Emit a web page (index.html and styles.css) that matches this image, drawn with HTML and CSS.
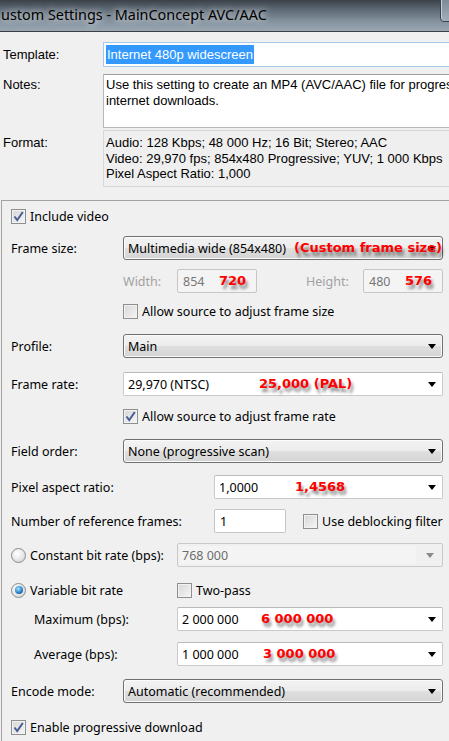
FILE: index.html
```html
<!DOCTYPE html>
<html>
<head>
<link rel="stylesheet" href="styles.css">
</head>
<body>
<div class="titlebar">
  <span class="title">ustom Settings - MainConcept AVC/AAC</span>
  <span class="close-btn"></span>
</div>

<div class="header">
  <div class="hrow template-row">
    <span class="hlabel">Template:</span>
    <div class="template-field"><span class="selected">Internet 480p widescreen</span></div>
  </div>
  <div class="hrow notes-row">
    <span class="hlabel">Notes:</span>
    <div class="notes-field">Use this setting to create an MP4 (AVC/AAC) file for progressive<br>internet downloads.</div>
  </div>
  <div class="hrow format-row">
    <span class="hlabel">Format:</span>
    <div class="format-field">Audio: 128 Kbps; 48 000 Hz; 16 Bit; Stereo; AAC<br>Video: 29,970 fps; 854x480 Progressive; YUV; 1 000 Kbps<br>Pixel Aspect Ratio: 1,000</div>
  </div>
</div>

<div class="panel">
  <div class="row r-include">
    <span class="check on"><svg width="13" height="13" viewBox="0 0 13 13"><path d="M2.5 6.5 L5.2 10 L10.8 2" fill="none" stroke="#4a5c97" stroke-width="2"/></svg></span>
    <span class="check-text">Include video</span>
  </div>

  <div class="row r-frame">
    <span class="lbl lbl-main">Frame size:</span>
    <div class="dropdown">Multimedia wide (854x480)<span class="arrow"></span><span class="note note-frame">(Custom frame size)</span></div>
  </div>

  <div class="row r-size">
    <span class="lbl lbl-main"></span>
    <span class="lbl dim lbl-w">Width:</span>
    <div class="numbox">854<span class="note note-num">720</span></div>
    <span class="lbl dim lbl-h">Height:</span>
    <div class="numbox">480<span class="note note-num">576</span></div>
  </div>

  <div class="row r-allow">
    <span class="lbl lbl-main"></span>
    <span class="check"></span>
    <span class="check-text">Allow source to adjust frame size</span>
  </div>

  <div class="row r-profile">
    <span class="lbl lbl-main">Profile:</span>
    <div class="dropdown">Main<span class="arrow"></span></div>
  </div>

  <div class="row r-rate">
    <span class="lbl lbl-main">Frame rate:</span>
    <div class="combo">29,970 (NTSC)<span class="arrow"></span><span class="note note-rate">25,000 (PAL)</span></div>
  </div>

  <div class="row r-allow2">
    <span class="lbl lbl-main"></span>
    <span class="check on"><svg width="13" height="13" viewBox="0 0 13 13"><path d="M2.5 6.5 L5.2 10 L10.8 2" fill="none" stroke="#4a5c97" stroke-width="2"/></svg></span>
    <span class="check-text">Allow source to adjust frame rate</span>
  </div>

  <div class="row r-field">
    <span class="lbl lbl-main">Field order:</span>
    <div class="dropdown">None (progressive scan)<span class="arrow"></span></div>
  </div>

  <div class="row r-par">
    <span class="lbl lbl-wide">Pixel aspect ratio:</span>
    <div class="combo">1,0000<span class="arrow"></span><span class="note note-par">1,4568</span></div>
  </div>

  <div class="row r-ref">
    <span class="lbl lbl-wide">Number of reference frames:</span>
    <div class="refbox">1</div>
    <span class="check"></span>
    <span class="check-text">Use deblocking filter</span>
  </div>

  <div class="row r-cbr">
    <span class="lbl lbl-mid"><span class="radio"></span><span class="check-text">Constant bit rate (bps):</span></span>
    <div class="combo disabled"><span class="combo-inner">768 000</span><span class="arrow"></span></div>
  </div>

  <div class="row r-vbr">
    <span class="lbl lbl-mid"><span class="radio on"><span class="dot"></span></span><span class="check-text">Variable bit rate</span></span>
    <span class="check"></span>
    <span class="check-text">Two-pass</span>
  </div>

  <div class="row r-max">
    <span class="lbl lbl-mid sub">Maximum (bps):</span>
    <div class="combo">2 000 000<span class="arrow"></span><span class="note note-bps">6 000 000</span></div>
  </div>

  <div class="row r-avg">
    <span class="lbl lbl-mid sub">Average (bps):</span>
    <div class="combo">1 000 000<span class="arrow"></span><span class="note note-bps2">3 000 000</span></div>
  </div>

  <div class="row r-encode">
    <span class="lbl lbl-main">Encode mode:</span>
    <div class="dropdown">Automatic (recommended)<span class="arrow"></span></div>
  </div>

  <div class="row r-enable">
    <span class="check on"><svg width="13" height="13" viewBox="0 0 13 13"><path d="M2.5 6.5 L5.2 10 L10.8 2" fill="none" stroke="#4a5c97" stroke-width="2"/></svg></span>
    <span class="check-text">Enable progressive download</span>
  </div>
</div>
</body>
</html>
```

FILE: styles.css
```css
html, body {
  margin: 0;
  width: 449px;
  height: 741px;
  overflow: hidden;
  background-color: #f0f0f0;
}

body {
  font-family: "Noto Sans", "DejaVu Sans", sans-serif;
  font-size: 12.5px;
  color: #000;
}

/* window title */
.titlebar {
  height: 31px;
  display: flex;
  align-items: center;
  background: linear-gradient(#3b4149 0%, #5c6874 30%, #85939f 70%, #9aa7b3 100%);
  border-bottom: 1px solid #3a3f45;
  position: relative;
}
.title {
  padding-left: 1px;
  margin-top: -2px;
  font-size: 14.4px;
  color: #000;
  text-shadow: 0 0 6px rgba(255,255,255,0.7), 0 0 10px rgba(255,255,255,0.5);
}
.close-btn {
  position: absolute;
  top: -1px;
  left: 440px;
  width: 20px;
  height: 21px;
  border: 1px solid #3c4148;
  border-bottom-left-radius: 4px;
  background: linear-gradient(#7e8a96, #a3afbb);
  box-shadow: inset 1px 0 0 #c6ced6;
}

/* top fields */
.header {
  font-family: "Liberation Sans", Arial, sans-serif;
  font-size: 13px;
  padding-left: 3px;
  overflow: hidden;
}
.hrow {
  display: flex;
}
.hlabel {
  width: 100px;
  flex: none;
}
.template-row {
  margin-top: 10px;
  align-items: center;
}
.template-field {
  width: 380px;
  flex: none;
  height: 25px;
  box-sizing: border-box;
  border: 1px solid #a6c9ec;
  background: #fff;
  padding: 2px 2px;
}
.selected {
  display: inline-block;
  background: #3399ff;
  color: #fff;
  line-height: 19px;
  padding: 0 1px;
}
.notes-row {
  margin-top: 7px;
}
.notes-row .hlabel {
  padding-top: 3px;
}
.notes-field {
  width: 380px;
  flex: none;
  height: 54px;
  box-sizing: border-box;
  border: 1px solid #b5b8bd;
  border-top-color: #9da1a6;
  background: #fff;
  padding: 2px 2px;
  line-height: 16px;
  white-space: nowrap;
  overflow: hidden;
}
.format-row {
  margin-top: 2px;
}
.format-row .hlabel {
  padding-top: 5px;
}
.format-field {
  width: 380px;
  flex: none;
  height: 57px;
  box-sizing: border-box;
  border: 1px solid #d8d8d8;
  background: #efefef;
  padding: 4px 2px;
  line-height: 15.5px;
  white-space: nowrap;
}

/* video panel */
.panel {
  margin: 13px 0 0 1px;
  border-top: 1px solid #a3a3a3;
  border-left: 1px solid #a3a3a3;
  padding: 0 6px 20px 9px;
}
.row {
  display: flex;
  align-items: center;
}
.lbl {
  flex: none;
  display: flex;
  align-items: center;
}
.lbl-main { width: 112px; }
.lbl-wide { width: 203px; }
.lbl-mid { width: 166px; }
.sub { padding-left: 23px; box-sizing: border-box; }
.dim { color: #a2a2a2; }
.lbl-w { width: 54px; }
.lbl-h { width: 57px; margin-left: 49px; }

.r-include { margin-top: 7px; height: 16px; }
.r-frame { margin-top: 12px; }
.r-size { margin-top: 9px; }
.r-allow { margin-top: 11px; height: 15px; }
.r-profile { margin-top: 15px; }
.r-rate { margin-top: 14px; }
.r-allow2 { margin-top: 13px; height: 15px; }
.r-field { margin-top: 15px; }
.r-par { margin-top: 12px; }
.r-ref { margin-top: 10px; }
.r-cbr { margin-top: 10px; }
.r-vbr { margin-top: 15px; height: 16px; }
.r-max { margin-top: 9px; }
.r-avg { margin-top: 11px; }
.r-encode { margin-top: 13px; }
.r-enable { margin-top: 16px; height: 16px; }

.dropdown, .combo {
  flex: 1;
  height: 24px;
  box-sizing: border-box;
  display: flex;
  align-items: center;
  padding-left: 4px;
  position: relative;
}
.dropdown {
  border: 1px solid #707070;
  border-radius: 3px;
  background: linear-gradient(#f3f3f3 0%, #ececec 48%, #dfdfdf 52%, #d3d3d3 100%);
  box-shadow: inset 0 0 0 1px #fbfbfb;
}
.combo {
  border: 1px solid #c9c9c9;
  border-top-color: #b9b9b9;
  border-radius: 2px;
  background: #fff;
}
.combo.disabled {
  background: #f0f0f0;
  border-color: #c9c9c9;
  color: #6d6d6d;
  padding: 2px;
}
.combo-inner {
  flex: 1;
  align-self: stretch;
  display: flex;
  align-items: center;
  padding-left: 2px;
  background: #f4f4f4;
  margin-right: 10px;
}
.arrow {
  margin-left: auto;
  margin-right: 6px;
  width: 0;
  height: 0;
  border-left: 4px solid transparent;
  border-right: 4px solid transparent;
  border-top: 5px solid #000;
}
.disabled .arrow {
  margin-left: 0;
  border-top-color: #8a8a8a;
}

.numbox, .refbox {
  flex: none;
  height: 24px;
  box-sizing: border-box;
  display: flex;
  align-items: center;
  padding-left: 5px;
  border: 1px solid #c6c6c6;
  border-radius: 2px;
  position: relative;
}
.numbox {
  width: 80px;
  background: #f4f4f4;
  color: #777;
}
.refbox {
  width: 72px;
  background: #fff;
  margin-right: 17px;
}

.check {
  flex: none;
  width: 15px;
  height: 15px;
  box-sizing: border-box;
  border: 1px solid #8e8f8f;
  background: linear-gradient(135deg, #d6d6d6, #f6f6f6);
  box-shadow: inset 0 0 0 1px #f2f2f2;
  display: flex;
  align-items: center;
  justify-content: center;
}
.check-text {
  margin-left: 4px;
}
.radio {
  flex: none;
  width: 15px;
  height: 15px;
  box-sizing: border-box;
  border-radius: 50%;
  border: 1px solid #8b8b8b;
  background: radial-gradient(circle at 40% 35%, #ffffff, #e4e4e4 60%, #c8c8c8);
  display: flex;
  align-items: center;
  justify-content: center;
}
.dot {
  width: 8px;
  height: 8px;
  border-radius: 50%;
  background: radial-gradient(circle at 40% 35%, #a8e4ff, #2b84c9 55%, #0c3f7c);
}

/* red annotations pasted over the dialog */
.note {
  position: absolute;
  top: 0;
  line-height: 22px;
  font-family: "DejaVu Sans", sans-serif;
  font-weight: bold;
  font-size: 13px;
  color: #ff0000;
  text-shadow: 2px 4px 3px rgba(0,0,0,0.45);
  white-space: nowrap;
}
.note-frame { left: 170px; }
.note-rate { left: 135px; }
.note-par { left: 80px; }
.note-bps { left: 83px; }
.note-bps2 { left: 85px; }
.note-num { left: 41px; }
```
